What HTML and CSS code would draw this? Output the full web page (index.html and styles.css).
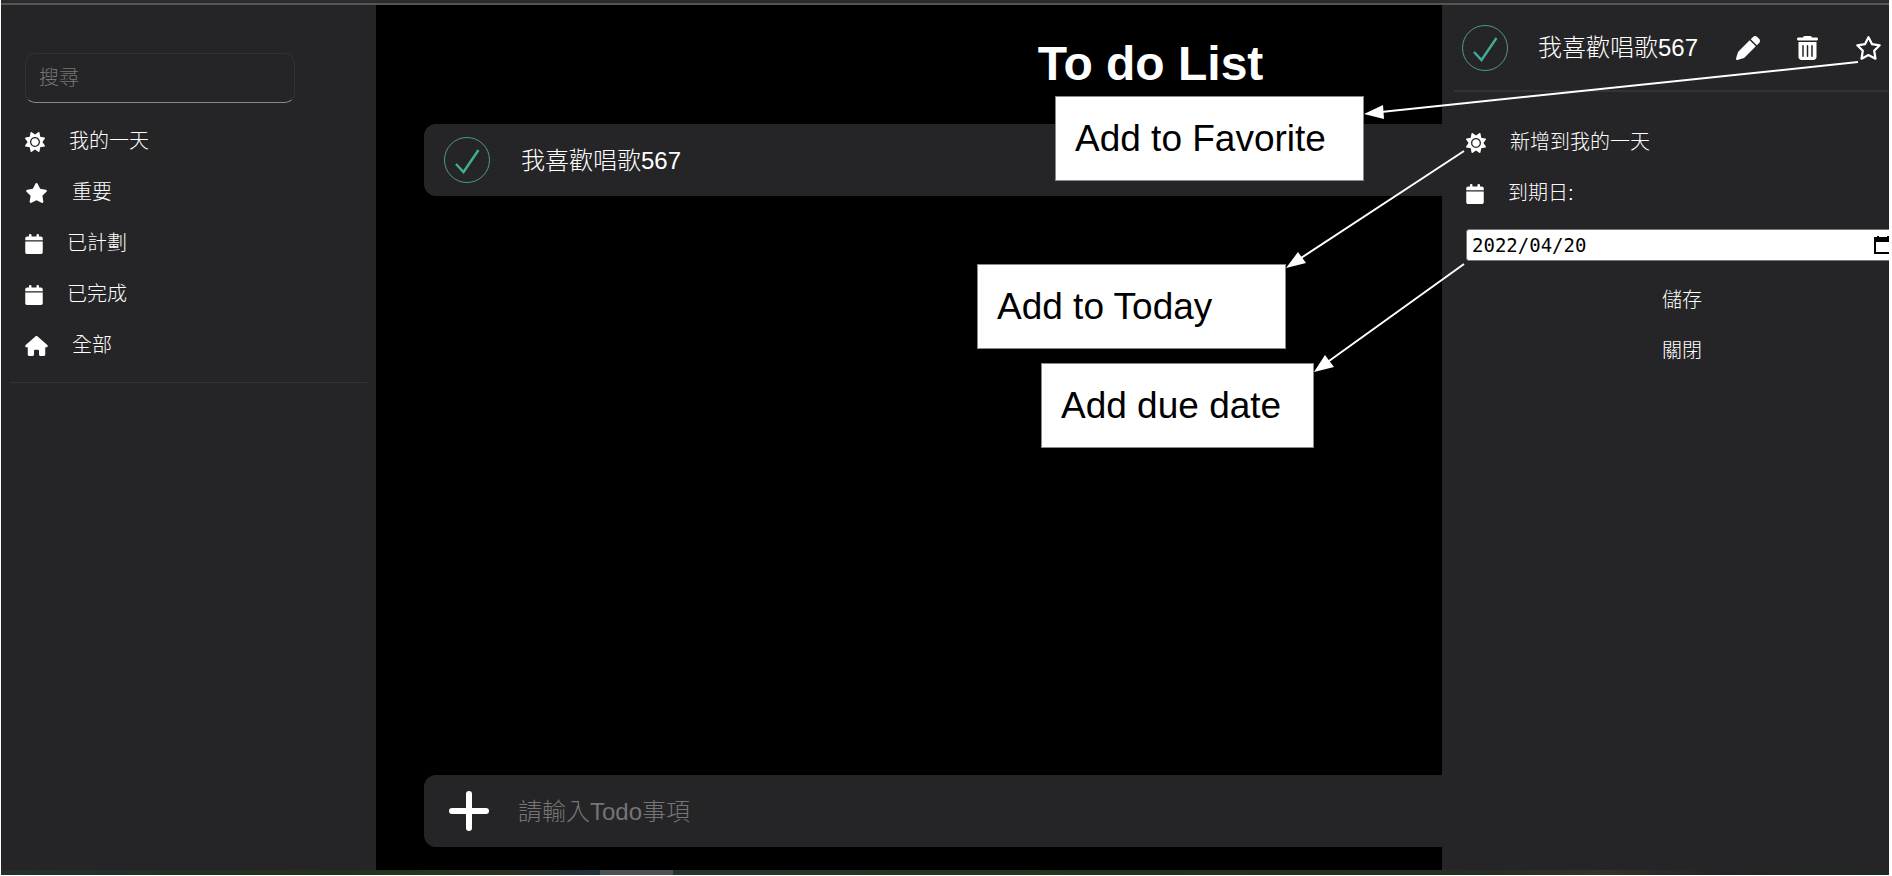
FILE: index.html
```html
<!DOCTYPE html>
<html lang="zh-Hant">
<head>
<meta charset="utf-8">
<title>To do List</title>
<link rel="stylesheet" href="styles.css">
</head>
<body>
<svg class="sprite" aria-hidden="true">
  <symbol id="sun" viewBox="0 0 512 512"><path d="M256 159.1c-53.02 0-95.1 42.98-95.1 95.1S202.1 351.1 256 351.1s95.1-42.98 95.1-95.1S309 159.1 256 159.1zM509.3 347L446.1 255.1l63.15-91.01c6.332-9.125 1.104-21.74-9.826-23.72l-109-19.7l-19.7-109c-1.975-10.93-14.59-16.16-23.72-9.824L256 65.89L164.1 2.736c-9.125-6.332-21.74-1.107-23.72 9.824L121.6 121.6L12.56 141.3C1.633 143.2-3.596 155.9 2.736 164.1L65.89 256l-63.15 91.01c-6.332 9.125-1.105 21.74 9.824 23.72l109 19.7l19.7 109c1.975 10.93 14.59 16.16 23.72 9.824L256 446.1l91.01 63.15c9.127 6.334 21.75 1.107 23.72-9.822l19.7-109l109-19.7C510.4 368.8 515.6 356.1 509.3 347zM256 383.1c-70.69 0-127.1-57.31-127.1-127.1c0-70.69 57.31-127.1 127.1-127.1s127.1 57.3 127.1 127.1C383.1 326.7 326.7 383.1 256 383.1z"/></symbol>
  <symbol id="star" viewBox="0 0 576 512"><path d="M381.2 150.3L524.9 171.5C536.8 173.2 546.8 181.6 550.6 193.1C554.4 204.7 551.3 217.3 542.7 225.9L438.5 328.1L463.1 474.7C465.1 486.7 460.2 498.9 450.2 506C440.3 513.1 427.2 514 416.5 508.3L288.1 439.8L159.8 508.3C149 514 135.9 513.1 126 506C116.1 498.9 111.1 486.7 113.2 474.7L137.8 328.1L33.58 225.9C24.97 217.3 21.91 204.7 25.69 193.1C29.46 181.6 39.43 173.2 51.42 171.5L195 150.3L259.4 17.97C264.7 6.995 275.8 0 288.1 0C300.4 0 311.6 6.995 316.9 17.97L381.2 150.3z"/></symbol>
  <symbol id="star-line" viewBox="0 0 576 512"><path fill="none" stroke="currentColor" stroke-width="48" stroke-linejoin="round" d="M288 26L364 174L526 198L410 314L436 484L288 407L140 484L166 314L50 198L212 174Z"/></symbol>
  <symbol id="calendar" viewBox="0 0 448 512"><path d="M96 32C96 14.33 110.3 0 128 0C145.7 0 160 14.33 160 32V64H288V32C288 14.33 302.3 0 320 0C337.7 0 352 14.33 352 32V64H400C426.5 64 448 85.49 448 112V160H0V112C0 85.49 21.49 64 48 64H96V32zM448 464C448 490.5 426.5 512 400 512H48C21.49 512 0 490.5 0 464V192H448V464z"/></symbol>
  <symbol id="house" viewBox="0 0 576 512"><path d="M575.8 255.5C575.8 273.5 560.8 287.6 543.8 287.6H511.8L512.5 447.7V472C512 494.1 494.1 512 472 512H392C369.9 512 352 494.1 352 472V384C352 366.3 337.7 352 320 352H256C238.3 352 224 366.3 224 384V472C224 494.1 206.1 512 184 512H104C81.91 512 64 494.1 64 472V287.6H32.05C14.02 287.6 0 273.5 0 255.5C0 246.5 3.004 238.5 10.01 231.5L266.4 8.016C273.4 1.002 281.4 0 288.4 0C295.4 0 303.4 2.004 309.5 7.014L564.8 231.5C572.8 238.5 576.9 246.5 575.8 255.5z"/></symbol>
  <symbol id="pen" viewBox="0 0 512 512"><path d="M362.7 19.32C387.7-5.678 428.3-5.678 453.3 19.32L492.7 58.75C517.7 83.74 517.7 124.3 492.7 149.3L444.3 197.7L314.3 67.72L362.7 19.32zM421.7 220.3L188.5 453.4C178.1 463.8 165.2 471.5 151.1 475.6L30.77 511C22.35 513.5 13.24 511.2 7.03 504.1C.8198 498.8-1.502 489.7 .976 481.2L36.37 360.9C40.53 346.8 48.16 333.9 58.57 323.5L291.7 90.34L421.7 220.3z"/></symbol>
  <symbol id="trash" viewBox="0 0 448 512"><path fill-rule="evenodd" d="M135.2 17.69C140.6 6.848 151.7 0 163.8 0H284.2C296.3 0 307.4 6.848 312.8 17.69L320 32H416C433.7 32 448 46.33 448 64C448 81.67 433.7 96 416 96H32C14.33 96 0 81.67 0 64C0 46.33 14.33 32 32 32H128L135.2 17.69zM32 128H416V448C416 483.3 387.3 512 352 512H96C60.65 512 32 483.3 32 448V128zM112 208V432Q112 448 128 448T144 432V208Q144 192 128 192T112 208zM208 208V432Q208 448 224 448T240 432V208Q240 192 224 192T208 208zM304 208V432Q304 448 320 448T336 432V208Q336 192 320 192T304 208z"/></symbol>
  <symbol id="check" viewBox="0 0 46 46"><g fill="none" stroke="#3fae96"><circle cx="23" cy="23" r="22.5" stroke="#4f9c8a"/><path stroke-width="2.4" d="M12 27L19.500 35L34.500 13"/></g></symbol>
</svg>

<div class="window">
  <div class="topbar"></div>
  <div class="app">
    <aside class="sidebar">
      <input class="search" type="search" placeholder="搜尋" aria-label="搜尋">
      <nav class="menu">
        <button class="row" type="button"><svg class="icon"><use href="#sun"/></svg>我的一天</button>
        <button class="row" type="button"><svg class="icon wide"><use href="#star"/></svg>重要</button>
        <button class="row" type="button"><svg class="icon slim"><use href="#calendar"/></svg>已計劃</button>
        <button class="row" type="button"><svg class="icon slim"><use href="#calendar"/></svg>已完成</button>
        <button class="row" type="button"><svg class="icon wide"><use href="#house"/></svg>全部</button>
      </nav>
      <hr class="rule">
    </aside>

    <main class="main">
      <h1 class="title">To do List</h1>
      <div class="bar">
        <label class="check"><input type="checkbox" checked aria-label="我喜歡唱歌567"><svg><use href="#check"/></svg></label>
        <span class="todo-text">我喜歡唱歌567</span>
      </div>
      <form class="bar bar-new">
        <button class="add" type="button" aria-label="新增"><svg viewBox="0 0 40 40"><path d="M20 3V37M3 20H37" stroke="#fff" stroke-width="6" stroke-linecap="round"/></svg></button>
        <input class="new-text" type="text" placeholder="請輸入Todo事項" aria-label="請輸入Todo事項">
      </form>
    </main>

    <section class="drawer">
      <header class="drawer-head">
        <label class="check"><input type="checkbox" checked aria-label="完成"><svg><use href="#check"/></svg></label>
        <span class="drawer-title">我喜歡唱歌567</span>
        <div class="tools">
          <button type="button" aria-label="編輯"><svg class="tool"><use href="#pen"/></svg></button>
          <button type="button" aria-label="刪除"><svg class="tool slim"><use href="#trash"/></svg></button>
          <button type="button" aria-label="重要"><svg class="tool wide"><use href="#star-line"/></svg></button>
        </div>
      </header>
      <div class="drawer-body">
        <button class="row" type="button"><svg class="icon"><use href="#sun"/></svg>新增到我的一天</button>
        <label class="row" for="due"><svg class="icon slim"><use href="#calendar"/></svg>到期日:</label>
        <div class="date">
          <input id="due" type="text" value="2022/04/20">
          <button type="button" aria-label="選擇日期"><svg viewBox="0 0 18 18"><path fill-rule="evenodd" d="M3 0H5V1H13V0H15V1H18V18H0V1H3zM2 6V16H16V6z"/></svg></button>
        </div>
        <button class="row center" type="button">儲存</button>
        <button class="row center" type="button">關閉</button>
      </div>
    </section>

    <div class="notes">
      <svg class="arrows" viewBox="0 0 1888 865" fill="#fff" stroke="#fff">
        <path stroke-width="2" d="M1857 57L1380 107M1463 146L1300 253M1463 259L1328 356"/>
        <path stroke="none" d="M1363 109L1382 100L1383 114zM1285 263L1297 247L1305 258zM1313 367L1324 350L1333 362z"/>
      </svg>
      <p class="note favorite">Add to Favorite</p>
      <p class="note today">Add to Today</p>
      <p class="note due">Add due date</p>
    </div>
  </div>
  <div class="bottombar"><span></span></div>
</div>
</body>
</html>
```
FILE: styles.css
```css
* { box-sizing: border-box; }

body {
  margin: 0;
  background: #fff;
  color: #fff;
  font: 300 20px/27px "Liberation Sans", "Noto Sans CJK TC", sans-serif;
}

button, input { font: inherit; color: inherit; }
button { padding: 0; border: 0; background: none; cursor: pointer; }
svg { display: block; fill: currentColor; }
.sprite { position: absolute; width: 0; height: 0; }

.window {
  display: flex;
  flex-direction: column;
  min-height: 100vh;
  padding: 0 3px 1px 1px;
}
.topbar { height: 5px; background: #2b2b2b; border-bottom: 2px solid #555; }
.bottombar {
  height: 5px;
  padding-left: 599px;
  background: linear-gradient(90deg, #27302a, #22322b 3%, #242f1e 15%, #25341f 22%, #2a3222 27%, #232f3b 31%, #26332b 36%, #26331f 55%, #242e24 78%, #353229 85%, #242426 91%, #202923);
}
.bottombar span { display: block; width: 73px; height: 5px; background: #4d5355; }

.app { position: relative; display: flex; flex: 1; overflow: hidden; background: #000; }

.sidebar { width: 375px; padding: 48px 9px 0; background: #252527; }
.search {
  display: block;
  width: 270px;
  height: 50px;
  margin: 0 15px 13px;
  padding: 0 13px;
  border: 1px solid #323234;
  border-bottom-color: #8a8a8a;
  border-radius: 10px;
  background: none;
  appearance: none;
  outline: 0;
}
.search::placeholder, .new-text::placeholder { color: #757575; opacity: 1; }

.menu { display: flex; flex-direction: column; padding: 0 15px; }
.row { display: flex; align-items: center; gap: 24px; height: 51px; text-align: left; }
.icon { width: 20px; height: 20px; }
.icon.slim { width: 18px; }
.icon.wide { width: 23px; }
.rule { height: 1px; margin: 11px 0 0; border: 0; background: #333335; }

.main {
  display: flex;
  flex: 1;
  flex-direction: column;
  padding: 31px 12px 23px 48px;
}
.title { margin: 0 0 32px; font-size: 48px; line-height: 56px; font-weight: 700; text-align: center; }
.bar {
  display: flex;
  align-items: center;
  height: 72px;
  padding: 0 20px;
  border-radius: 12px;
  background: #252527;
  font-size: 24px;
}
.bar-new { margin-top: auto; padding-left: 25px; }
.check { display: grid; width: 46px; height: 46px; }
.check input { grid-area: 1 / 1; margin: 0; appearance: none; }
.check svg { grid-area: 1 / 1; width: 46px; height: 46px; }
.todo-text { margin-left: 31px; }
.add svg { width: 40px; height: 40px; }
.new-text { flex: 1; margin-left: 29px; padding: 0; border: 0; background: none; outline: 0; }

.drawer {
  position: absolute;
  inset: 0 0 0 auto;
  width: 447px;
  padding-left: 12px;
  background: #252527;
}
.drawer-head {
  display: flex;
  align-items: center;
  height: 87px;
  padding: 0 7px 0 8px;
  border-bottom: 2px solid #333335;
  font-size: 24px;
}
.drawer-title { margin-left: 30px; white-space: nowrap; }
.tools { display: flex; flex: 1; align-items: center; justify-content: space-between; margin-left: 38px; }
.tool { width: 24px; height: 24px; }
.tool.slim { width: 21px; }
.tool.wide { width: 27px; }
.drawer-body {
  display: flex;
  flex-direction: column;
  margin-right: -9px;
  padding: 25px 0 0 12px;
}
.date {
  display: flex;
  align-items: center;
  height: 32px;
  margin: 10px 0 14px;
  padding: 0 5px;
  border: 1px solid #767676;
  border-radius: 3px;
  background: #fff;
  color: #000;
}
.date input {
  flex: 1;
  min-width: 0;
  padding: 0;
  border: 0;
  background: none;
  font: 19px/24px "DejaVu Sans Mono", monospace;
  outline: 0;
}
.date svg { width: 18px; height: 18px; }
.center { justify-content: center; }

/* Callouts pinned over the app. */
.notes { position: absolute; inset: 0; pointer-events: none; }
.arrows { position: absolute; top: 0; right: 0; width: 1888px; height: 865px; }
.note {
  position: absolute;
  width: 309px;
  margin: 0;
  padding: 20px 19px;
  border: 1px solid #8a8a8a;
  background: #fff;
  color: #000;
  font-size: 37px;
  line-height: 43px;
}
.favorite { top: 91px; right: 525px; }
.today { top: 259px; right: 603px; }
.due { top: 358px; right: 575px; width: 273px; }
```
